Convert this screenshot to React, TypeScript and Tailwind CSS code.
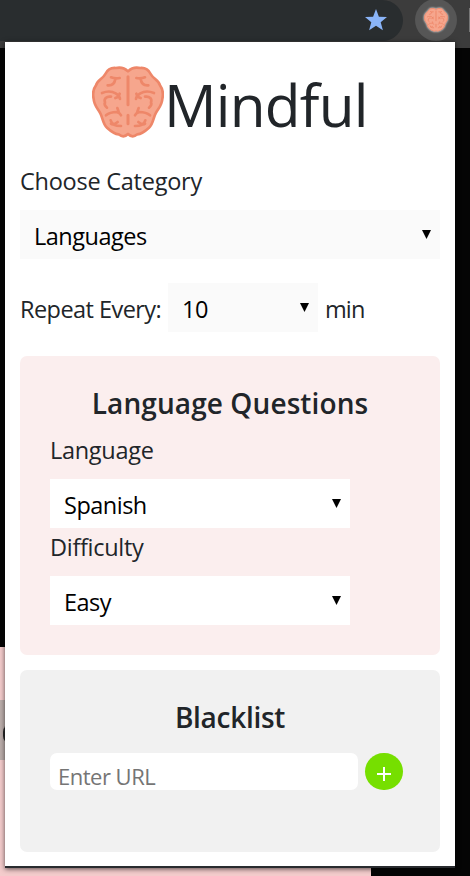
import React from "react";

function Brain({ className }: { className: string }) {
  return (
    <svg viewBox="35 34 216 217" className={className} fill="none" strokeLinecap="round" strokeLinejoin="round">
      <path
        d="M143 49C132 38 119 36 106 39C93 38 81 45 75 57C68 71 51 76 47 91C39 102 37 119 40 132C41 151 52 160 60 175C68 190 67 206 80 218C92 229 103 237 115 238C126 247 135 245 143 237C151 245 160 247 171 238C183 237 194 229 206 218C219 206 218 190 226 175C234 160 245 151 246 132C249 119 247 102 239 91C235 76 218 71 211 57C205 45 193 38 180 39C167 36 154 38 143 49Z"
        fill="#f6a68d"
        stroke="#ee8769"
        strokeWidth="8"
      />
      <path d="M143 65V149M143 181V206" stroke="#ee8769" strokeWidth="9" />
      <g stroke="#ee8769" strokeWidth="8">
        <path d="M92 67Q105 72 118 69M105 72C103 85 94 92 82 91" />
        <path d="M65 114C80 108 94 108 106 115C114 120 119 126 119 132M118 116L115 125L105 129" />
        <path d="M92 125C78 123 70 132 74 142C71 148 75 154 80 158" />
        <path d="M111 159L115 170M77 181C86 173 98 171 109 171Q119 174 122 181" />
        <path d="M91 196C94 207 102 213 122 213M92 206Q99 212 112 201" />
        <path d="M194 67Q181 72 168 69M181 72C183 85 192 92 204 91" />
        <path d="M221 114C206 108 192 108 180 115C172 120 167 126 167 132M168 116L171 125L181 129" />
        <path d="M194 125C208 123 216 132 212 142C215 148 211 154 206 158" />
        <path d="M175 159L171 170M209 181C200 173 188 171 177 171Q167 174 164 181" />
        <path d="M195 196C192 207 184 213 164 213M194 206Q187 212 174 201" />
      </g>
    </svg>
  );
}

function Select({ value, className }: { value: string; className: string }) {
  return (
    <div className={`flex h-[49px] justify-between pl-[14px] pr-[9px] text-black ${className}`}>
      <span className="pt-2 leading-9">{value}</span>
      <svg viewBox="0 0 9 9" className="mt-5 h-[9px] w-[9px]">
        <path d="M0 0H9L4.5 9Z" fill="#000" />
      </svg>
    </div>
  );
}

function Backdrop() {
  return (
    <div className="flex h-full flex-col bg-[#050505]">
      <div className="flex h-12 shrink-0 items-start bg-[#3c3c3c]">
        <div className="flex h-[41px] w-[403px] justify-end rounded-r-full bg-[#292d2f] pr-[15px] pt-2">
          <svg viewBox="0 0 24 24" className="h-6 w-6">
            <path d="M12 1L14.9 8.8L23 9.1L16.7 14.2L18.9 22.2L12 17.7L5.1 22.2L7.3 14.2L1 9.1L9.1 8.8Z" fill="#8ab4f8" />
          </svg>
        </div>
        <div className="-mt-px ml-3 flex h-[42px] w-[42px] items-center justify-center rounded-full bg-[#565656]">
          <Brain className="h-6 w-6 drop-shadow-[0_0_1px_#ffffff]" />
        </div>
        <div className="ml-3 mt-2 h-6 w-px bg-[#777]" />
      </div>
      <div className="h-[599px] shrink-0" />
      <div className="w-[371px] grow bg-[#f4cccc] pt-[53px]">
        <div className="flex h-[60px] w-5 items-center bg-[#bcaeab] pl-[3px] pt-2">
          <div className="h-5 w-4 rounded-full bg-[#292929]" />
        </div>
      </div>
    </div>
  );
}

export default function App() {
  return (
    <div className="relative h-[876px] w-[470px] overflow-hidden font-['Open_Sans','Noto_Sans',sans-serif] text-[23.5px] tracking-[-0.5px] text-[#212529]">
      <Backdrop />
      <main className="absolute left-[5px] top-[42px] h-[826px] w-[450px] border-b-2 border-[#292b2f] bg-white px-[15px] shadow-[0_1px_5px_rgba(0,0,0,0.65)]">
        <h1 className="flex h-[121px] pl-[72px] pt-6">
          <Brain className="h-[73px] w-[72px]" />
          <span className="text-[58.5px] leading-[77px] tracking-[-0.8px]">Mindful</span>
        </h1>
        <div className="h-[47px] leading-9 tracking-[-0.25px]">Choose Category</div>
        <Select value="Languages" className="bg-[#fafafa]" />
        <div className="mt-6 flex h-[49px]">
          <span className="w-[148px] whitespace-nowrap pt-2 leading-9 tracking-[-0.55px]">Repeat Every:</span>
          <Select value="10" className="w-[150px] bg-[#fafafa]" />
          <span className="ml-[7px] pt-2 leading-9 tracking-[-0.9px]">min</span>
        </div>
        <section className="mt-6 h-[299px] rounded-[7px] bg-[#fbeeee] px-[30px] pt-7">
          <h2 className="text-center text-[28px] font-semibold leading-[39px] tracking-[0.1px]">Language Questions</h2>
          <div className="h-14 pt-[9px] leading-9 tracking-[-0.3px]">Language</div>
          <Select value="Spanish" className="w-[300px] bg-white" />
          <div className="h-12 pt-px leading-9 tracking-[-0.3px]">Difficulty</div>
          <Select value="Easy" className="w-[300px] bg-white" />
        </section>
        <section className="mt-[15px] h-[182px] rounded-[7px] bg-[#f1f1f1] px-[30px] pt-7">
          <h2 className="text-center text-[28px] font-semibold leading-[39px] tracking-[-0.3px]">Blacklist</h2>
          <div className="mt-4 flex gap-[7px]">
            <div className="h-[37px] w-[308px] overflow-hidden rounded-[7px] bg-white pl-2 pt-[7px] text-[22px] leading-8 text-[#757575]">
              Enter URL
            </div>
            <div className="flex h-[37px] w-[38px] items-center justify-center rounded-full bg-[#76df00]">
              <svg viewBox="0 0 16 16" className="mt-[5px] h-4 w-4">
                <path d="M8 1V15M1 8H15" stroke="#fff" strokeWidth="2" />
              </svg>
            </div>
          </div>
        </section>
      </main>
    </div>
  );
}
